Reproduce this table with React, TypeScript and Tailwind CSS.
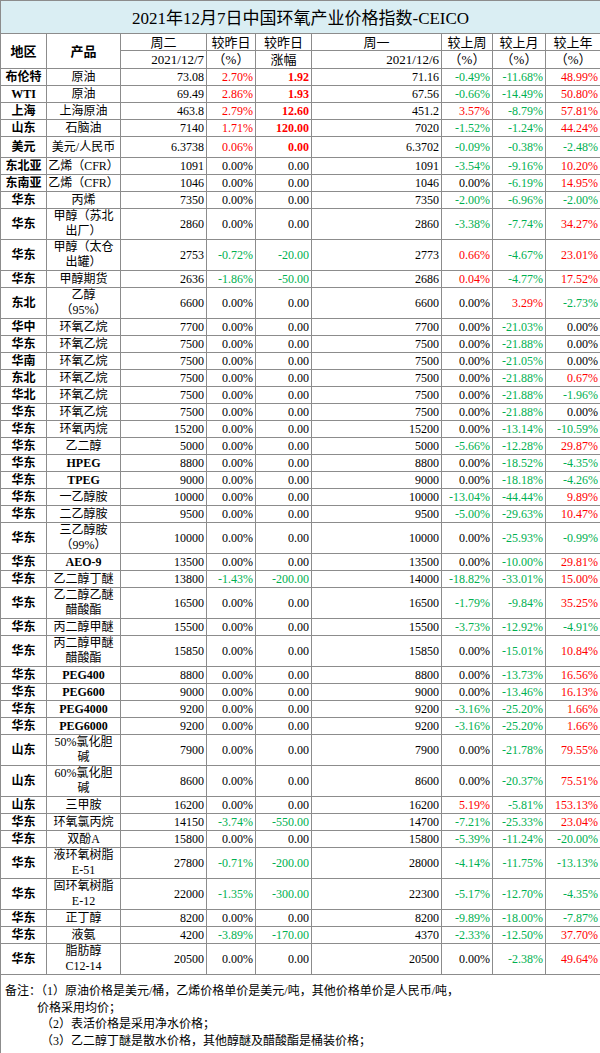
import * as React from "react";

type Row = {
  region: string;
  product: string; // "|" marks a line break
  tue: string;
  dayPct: string;
  dayChg: string;
  mon: string;
  week: string;
  month: string;
  year: string;
  size?: "s" | "m" | "d";
  forceRed?: boolean;
  latin?: boolean;
};

const Z = ["0.00%", "0.00"];

const ROWS: Row[] = [
  { region: "布伦特", product: "原油", tue: "73.08", dayPct: "2.70%", dayChg: "1.92", mon: "71.16", week: "-0.49%", month: "-11.68%", year: "48.99%" },
  { region: "WTI", product: "原油", tue: "69.49", dayPct: "2.86%", dayChg: "1.93", mon: "67.56", week: "-0.66%", month: "-14.49%", year: "50.80%" },
  { region: "上海", product: "上海原油", tue: "463.8", dayPct: "2.79%", dayChg: "12.60", mon: "451.2", week: "3.57%", month: "-8.79%", year: "57.81%" },
  { region: "山东", product: "石脑油", tue: "7140", dayPct: "1.71%", dayChg: "120.00", mon: "7020", week: "-1.52%", month: "-1.24%", year: "44.24%" },
  { region: "美元", product: "美元/人民币", tue: "6.3738", dayPct: "0.06%", dayChg: "0.00", mon: "6.3702", week: "-0.09%", month: "-0.38%", year: "-2.48%", size: "m", forceRed: true },
  { region: "东北亚", product: "乙烯（CFR）", tue: "1091", dayPct: Z[0], dayChg: Z[1], mon: "1091", week: "-3.54%", month: "-9.16%", year: "10.20%" },
  { region: "东南亚", product: "乙烯（CFR）", tue: "1046", dayPct: Z[0], dayChg: Z[1], mon: "1046", week: "0.00%", month: "-6.19%", year: "14.95%" },
  { region: "华东", product: "丙烯", tue: "7350", dayPct: Z[0], dayChg: Z[1], mon: "7350", week: "-2.00%", month: "-6.96%", year: "-2.00%" },
  { region: "华东", product: "甲醇（苏北|出厂）", tue: "2860", dayPct: Z[0], dayChg: Z[1], mon: "2860", week: "-3.38%", month: "-7.74%", year: "34.27%", size: "d" },
  { region: "华东", product: "甲醇（太仓|出罐）", tue: "2753", dayPct: "-0.72%", dayChg: "-20.00", mon: "2773", week: "0.66%", month: "-4.67%", year: "23.01%", size: "d" },
  { region: "华东", product: "甲醇期货", tue: "2636", dayPct: "-1.86%", dayChg: "-50.00", mon: "2686", week: "0.04%", month: "-4.77%", year: "17.52%" },
  { region: "东北", product: "乙醇|（95%）", tue: "6600", dayPct: Z[0], dayChg: Z[1], mon: "6600", week: "0.00%", month: "3.29%", year: "-2.73%", size: "d" },
  { region: "华中", product: "环氧乙烷", tue: "7700", dayPct: Z[0], dayChg: Z[1], mon: "7700", week: "0.00%", month: "-21.03%", year: "0.00%" },
  { region: "华东", product: "环氧乙烷", tue: "7500", dayPct: Z[0], dayChg: Z[1], mon: "7500", week: "0.00%", month: "-21.88%", year: "0.00%" },
  { region: "华南", product: "环氧乙烷", tue: "7500", dayPct: Z[0], dayChg: Z[1], mon: "7500", week: "0.00%", month: "-21.05%", year: "0.00%" },
  { region: "东北", product: "环氧乙烷", tue: "7500", dayPct: Z[0], dayChg: Z[1], mon: "7500", week: "0.00%", month: "-21.88%", year: "0.67%" },
  { region: "华北", product: "环氧乙烷", tue: "7500", dayPct: Z[0], dayChg: Z[1], mon: "7500", week: "0.00%", month: "-21.88%", year: "-1.96%" },
  { region: "华东", product: "环氧乙烷", tue: "7500", dayPct: Z[0], dayChg: Z[1], mon: "7500", week: "0.00%", month: "-21.88%", year: "0.00%" },
  { region: "华东", product: "环氧丙烷", tue: "15200", dayPct: Z[0], dayChg: Z[1], mon: "15200", week: "0.00%", month: "-13.14%", year: "-10.59%" },
  { region: "华东", product: "乙二醇", tue: "5000", dayPct: Z[0], dayChg: Z[1], mon: "5000", week: "-5.66%", month: "-12.28%", year: "29.87%" },
  { region: "华东", product: "HPEG", tue: "8800", dayPct: Z[0], dayChg: Z[1], mon: "8800", week: "0.00%", month: "-18.52%", year: "-4.35%", latin: true },
  { region: "华东", product: "TPEG", tue: "9000", dayPct: Z[0], dayChg: Z[1], mon: "9000", week: "0.00%", month: "-18.18%", year: "-4.26%", latin: true },
  { region: "华东", product: "一乙醇胺", tue: "10000", dayPct: Z[0], dayChg: Z[1], mon: "10000", week: "-13.04%", month: "-44.44%", year: "9.89%" },
  { region: "华东", product: "二乙醇胺", tue: "9500", dayPct: Z[0], dayChg: Z[1], mon: "9500", week: "-5.00%", month: "-29.63%", year: "10.47%" },
  { region: "华东", product: "三乙醇胺|（99%）", tue: "10000", dayPct: Z[0], dayChg: Z[1], mon: "10000", week: "0.00%", month: "-25.93%", year: "-0.99%", size: "d" },
  { region: "华东", product: "AEO-9", tue: "13500", dayPct: Z[0], dayChg: Z[1], mon: "13500", week: "0.00%", month: "-10.00%", year: "29.81%", latin: true },
  { region: "华东", product: "乙二醇丁醚", tue: "13800", dayPct: "-1.43%", dayChg: "-200.00", mon: "14000", week: "-18.82%", month: "-33.01%", year: "15.00%" },
  { region: "华东", product: "乙二醇乙醚|醋酸酯", tue: "16500", dayPct: Z[0], dayChg: Z[1], mon: "16500", week: "-1.79%", month: "-9.84%", year: "35.25%", size: "d" },
  { region: "华东", product: "丙二醇甲醚", tue: "15500", dayPct: Z[0], dayChg: Z[1], mon: "15500", week: "-3.73%", month: "-12.92%", year: "-4.91%" },
  { region: "华东", product: "丙二醇甲醚|醋酸酯", tue: "15850", dayPct: Z[0], dayChg: Z[1], mon: "15850", week: "0.00%", month: "-15.01%", year: "10.84%", size: "d" },
  { region: "华东", product: "PEG400", tue: "8800", dayPct: Z[0], dayChg: Z[1], mon: "8800", week: "0.00%", month: "-13.73%", year: "16.56%", latin: true },
  { region: "华东", product: "PEG600", tue: "9000", dayPct: Z[0], dayChg: Z[1], mon: "9000", week: "0.00%", month: "-13.46%", year: "16.13%", latin: true },
  { region: "华东", product: "PEG4000", tue: "9200", dayPct: Z[0], dayChg: Z[1], mon: "9200", week: "-3.16%", month: "-25.20%", year: "1.66%", latin: true },
  { region: "华东", product: "PEG6000", tue: "9200", dayPct: Z[0], dayChg: Z[1], mon: "9200", week: "-3.16%", month: "-25.20%", year: "1.66%", latin: true },
  { region: "山东", product: "50%氯化胆|碱", tue: "7900", dayPct: Z[0], dayChg: Z[1], mon: "7900", week: "0.00%", month: "-21.78%", year: "79.55%", size: "d" },
  { region: "山东", product: "60%氯化胆|碱", tue: "8600", dayPct: Z[0], dayChg: Z[1], mon: "8600", week: "0.00%", month: "-20.37%", year: "75.51%", size: "d" },
  { region: "山东", product: "三甲胺", tue: "16200", dayPct: Z[0], dayChg: Z[1], mon: "16200", week: "5.19%", month: "-5.81%", year: "153.13%" },
  { region: "华东", product: "环氧氯丙烷", tue: "14150", dayPct: "-3.74%", dayChg: "-550.00", mon: "14700", week: "-7.21%", month: "-25.33%", year: "23.04%" },
  { region: "华东", product: "双酚A", tue: "15800", dayPct: Z[0], dayChg: Z[1], mon: "15800", week: "-5.39%", month: "-11.24%", year: "-20.00%" },
  { region: "华东", product: "液环氧树脂|E-51", tue: "27800", dayPct: "-0.71%", dayChg: "-200.00", mon: "28000", week: "-4.14%", month: "-11.75%", year: "-13.13%", size: "d" },
  { region: "华东", product: "固环氧树脂|E-12", tue: "22000", dayPct: "-1.35%", dayChg: "-300.00", mon: "22300", week: "-5.17%", month: "-12.70%", year: "-4.35%", size: "d" },
  { region: "华东", product: "正丁醇", tue: "8200", dayPct: Z[0], dayChg: Z[1], mon: "8200", week: "-9.89%", month: "-18.00%", year: "-7.87%" },
  { region: "华东", product: "液氨", tue: "4200", dayPct: "-3.89%", dayChg: "-170.00", mon: "4370", week: "-2.33%", month: "-12.50%", year: "37.70%" },
  { region: "华东", product: "脂肪醇|C12-14", tue: "20500", dayPct: Z[0], dayChg: Z[1], mon: "20500", week: "0.00%", month: "-2.38%", year: "49.64%", size: "d" },
];

const FONT = "font-['Liberation_Serif','Noto_Sans_CJK_SC',serif]";
const BORDER = "border border-[#8c8c8c] p-0";
const CELL = `${BORDER} leading-none`;

function tone(v: string, forceRed = false) {
  if (forceRed) return "text-[#ff0000]";
  if (v.startsWith("-")) return "text-[#00b050]";
  if (/^0\.00%?$/.test(v)) return "text-black";
  return "text-[#ff0000]";
}

function Product({ text }: { text: string }) {
  const parts = text.split("|");
  return (
    <>
      {parts.map((p, i) => (
        <React.Fragment key={i}>
          {i > 0 && <br />}
          {p}
        </React.Fragment>
      ))}
    </>
  );
}

export default function App() {
  return (
    <div className={`w-[600px] bg-white text-black ${FONT}`}>
      <table className="w-[600px] table-fixed border-collapse">
        <colgroup>
          <col className="w-[46px]" />
          <col className="w-[74px]" />
          <col className="w-[86px]" />
          <col className="w-[49px]" />
          <col className="w-[56px]" />
          <col className="w-[130px]" />
          <col className="w-[51px]" />
          <col className="w-[53px]" />
          <col className="w-[55px]" />
        </colgroup>
        <thead>
          <tr className="h-[33px]">
            <th colSpan={9} className={`${CELL} bg-[#daeef3] pt-[3px] text-center text-[17px] font-normal`}>
              2021年12月7日中国环氧产业价格指数-CEICO
            </th>
          </tr>
          <tr className="h-[17px] text-[13px]">
            <th rowSpan={2} className={`${CELL} text-center font-bold`}>地区</th>
            <th rowSpan={2} className={`${CELL} text-center font-bold`}>产品</th>
            <th className={`${CELL} text-center font-normal`}>周二</th>
            <th className={`${CELL} text-center font-normal`}>较昨日</th>
            <th className={`${CELL} text-center font-normal`}>较昨日</th>
            <th className={`${CELL} text-center font-normal`}>周一</th>
            <th className={`${CELL} text-center font-normal`}>较上周</th>
            <th className={`${CELL} text-center font-normal`}>较上月</th>
            <th className={`${CELL} text-center font-normal`}>较上年</th>
          </tr>
          <tr className="h-[18px] text-[13px]">
            <th className={`${CELL} pr-[2px] text-right font-normal`}>2021/12/7</th>
            <th className={`${CELL} text-center font-normal`}>（%）</th>
            <th className={`${CELL} text-center font-normal`}>涨幅</th>
            <th className={`${CELL} pr-[2px] text-right font-normal`}>2021/12/6</th>
            <th className={`${CELL} text-center font-normal`}>（%）</th>
            <th className={`${CELL} text-center font-normal`}>（%）</th>
            <th className={`${CELL} text-center font-normal`}>（%）</th>
          </tr>
        </thead>
        <tbody className="text-[12px]">
          {ROWS.map((r, i) => {
            const h = r.size === "d" ? "h-[31px]" : r.size === "m" ? "h-[21px]" : "h-[17px]";
            const chgBold = r.forceRed || (!r.dayChg.startsWith("-") && r.dayChg !== "0.00");
            return (
              <tr key={i} className={h}>
                <td className={`${CELL} text-center font-bold`}>{r.region}</td>
                <td className={`${BORDER} text-center leading-[15px] ${r.latin ? "font-bold" : ""}`}>
                  <Product text={r.product} />
                </td>
                <td className={`${CELL} pr-[2px] text-right`}>{r.tue}</td>
                <td className={`${CELL} pr-[2px] text-right ${tone(r.dayPct, r.forceRed)}`}>{r.dayPct}</td>
                <td className={`${CELL} pr-[2px] text-right ${tone(r.dayChg, r.forceRed)} ${chgBold ? "font-bold" : ""}`}>
                  {r.dayChg}
                </td>
                <td className={`${CELL} pr-[2px] text-right`}>{r.mon}</td>
                <td className={`${CELL} pr-[2px] text-right ${tone(r.week)}`}>{r.week}</td>
                <td className={`${CELL} pr-[2px] text-right ${tone(r.month)}`}>{r.month}</td>
                <td className={`${CELL} pr-[2px] text-right ${tone(r.year)}`}>{r.year}</td>
              </tr>
            );
          })}
          <tr>
            <td colSpan={9} className={`${BORDER} h-[75px] px-[4px] pb-[6px] pt-[8px] align-top text-[12px] leading-[16.5px]`}>
              <div>备注：（1）原油价格是美元/桶，乙烯价格单价是美元/吨，其他价格单价是人民币/吨，</div>
              <div className="pl-[32px]">价格采用均价；</div>
              <div className="pl-[36px]">（2）表活价格是采用净水价格；</div>
              <div className="pl-[36px]">（3）乙二醇丁醚是散水价格，其他醇醚及醋酸酯是桶装价格；</div>
            </td>
          </tr>
        </tbody>
      </table>
    </div>
  );
}
